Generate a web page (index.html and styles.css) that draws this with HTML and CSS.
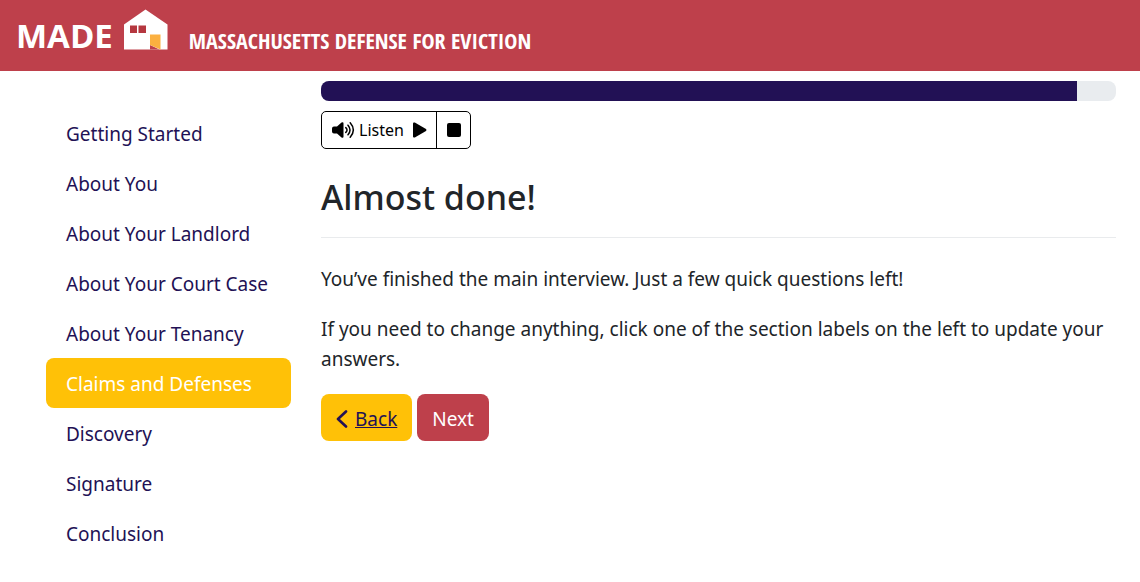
FILE: index.html
```html
<!DOCTYPE html>
<html lang="en">
<head>
<meta charset="utf-8">
<meta name="viewport" content="width=device-width, initial-scale=1">
<title>Massachusetts Defense for Eviction</title>
<link rel="stylesheet" href="styles.css">
</head>
<body>
<header class="site-header">
  <a class="brand" href="#">
    <span class="brand-name">MADE</span>
    <svg class="brand-house" width="46" height="42" viewBox="0 0 46 42" aria-hidden="true">
      <path fill="#fff" d="M1 15.500 22.500 0.500 44.500 15.500V40.500H1z"/>
      <path fill="#be404b" d="M27 36 36.500 40.500H27z"/>
      <path fill="#fbb040" d="M27 25.500H37.500V40.500L27 36z"/>
      <path fill="#b5373f" d="M7 16.500h7v7.500H7zM15.500 16.500h7.500v7.500h-7.500z"/>
    </svg>
    <span class="brand-tagline">MASSACHUSETTS DEFENSE FOR EVICTION</span>
  </a>
</header>
<div class="layout">
  <nav class="sections" aria-label="Sections">
    <a class="section-link" href="#">Getting Started</a>
    <a class="section-link" href="#">About You</a>
    <a class="section-link" href="#">About Your Landlord</a>
    <a class="section-link" href="#">About Your Court Case</a>
    <a class="section-link" href="#">About Your Tenancy</a>
    <a class="section-link active" href="#" aria-current="step">Claims and Defenses</a>
    <a class="section-link" href="#">Discovery</a>
    <a class="section-link" href="#">Signature</a>
    <a class="section-link" href="#">Conclusion</a>
  </nav>
  <main class="content">
    <div class="progress" role="progressbar" aria-label="Interview progress" aria-valuenow="95" aria-valuemin="0" aria-valuemax="100">
      <div class="progress-bar" style="width: 95.1%"></div>
    </div>
    <div class="audio-controls">
      <button class="audio-button" type="button">
        <svg width="23" height="18" viewBox="0 0 23 18" aria-hidden="true">
          <path d="M2 5.500H5L9.500 1.600Q11.500 .500 11.500 2.500V15.500Q11.500 17.500 9.500 16.400L5 12.500H2Q0 12.500 0 10.500V7.500Q0 5.500 2 5.500z"/>
          <path fill="none" stroke="#000" stroke-width="1.500" stroke-linecap="round" d="M13.800 6.600Q16.300 9 13.800 11.400M16 4.200Q20 9 16 13.800M18.200 1.800Q24.500 9 18.200 16.200"/>
        </svg>
        <span>Listen</span>
        <svg class="play" width="14" height="16" viewBox="0 0 14 16" aria-hidden="true"><path d="M0 1.500Q0 0 1.800 .600L13 7Q14 8 13 9L1.800 15.400Q0 16 0 14.500z"/></svg>
      </button>
      <button class="audio-button" type="button" aria-label="Stop">
        <svg width="14" height="14" viewBox="0 0 14 14" aria-hidden="true"><rect width="14" height="14" rx="2"/></svg>
      </button>
    </div>
    <h1 class="title">Almost done!</h1>
    <p>You’ve finished the main interview. Just a few quick questions left!</p>
    <p>If you need to change anything, click one of the section labels on the left to update your answers.</p>
    <div class="actions">
      <button class="action back" type="button">
        <svg width="12" height="18" viewBox="0 0 12 18" aria-hidden="true"><path fill="none" stroke="#221155" stroke-width="2.600" stroke-linecap="round" stroke-linejoin="round" d="M10 1.500 2 9 10 16.500"/></svg>
        <span class="back-label">Back</span>
      </button>
      <button class="action next" type="button">Next</button>
    </div>
  </main>
</div>
</body>
</html>
```
FILE: styles.css
```css
* { box-sizing: border-box; }
body {
  margin: 0;
  background: #fff;
  color: #212529;
  font: 19px/30px "Noto Sans", "Open Sans", sans-serif;
}
.site-header {
  background: #be404b;
  padding: 9px 16px 20px;
}
.brand {
  display: flex;
  align-items: flex-end;
  color: #fff;
  text-decoration: none;
}
.brand-name {
  font: bold 33px/30px "Open Sans", sans-serif;
}
.brand-house { margin: 0 20px 0 10px; }
.brand-tagline {
  font: bold 22px/22px "Open Sans Condensed", "Liberation Sans Narrow", "DejaVu Sans Condensed", sans-serif;
}
.layout {
  display: grid;
  grid-template-columns: 245px minmax(0, 1fr);
  gap: 30px;
  padding: 10px 24px 24px 46px;
}
.sections {
  display: flex;
  flex-direction: column;
  padding-top: 27px;
}
.section-link {
  padding: 11px 20px 9px;
  border-radius: 8px;
  color: #221155;
  text-decoration: none;
}
.section-link.active {
  background: #ffc107;
  color: #fff;
}
.progress {
  height: 20px;
  overflow: hidden;
  border-radius: 8px;
  background: #e9ecef;
}
.progress-bar {
  height: 100%;
  background: #221155;
}
.audio-controls {
  display: flex;
  width: fit-content;
  margin-top: 10px;
  border: 1px solid #000;
  border-radius: 5px;
}
.audio-button {
  display: flex;
  align-items: center;
  gap: 4px;
  height: 36px;
  padding: 0 9px 0 10px;
  border: 0;
  background: none;
  color: #000;
  font: 16px/24px "Noto Sans", "Open Sans", sans-serif;
}
.audio-button + .audio-button { border-left: 1px solid #000; }
.play { margin-left: 5px; }
.title {
  margin: 28px 0 26px;
  padding-bottom: 20px;
  border-bottom: 1px solid #e9ebed;
  font-size: 34px;
  line-height: 40px;
  font-weight: 500;
}
p { margin: 0 0 20px; }
.actions {
  display: flex;
  gap: 5px;
}
.action {
  display: flex;
  align-items: center;
  gap: 7px;
  height: 47px;
  padding: 2px 15px 0;
  border: 0;
  border-radius: 8px;
  font: 19px/30px "Noto Sans", "Open Sans", sans-serif;
}
.back { background: #ffc107; color: #221155; }
.back-label { text-decoration: underline; }
.next { background: #be404b; color: #fff; }
```
